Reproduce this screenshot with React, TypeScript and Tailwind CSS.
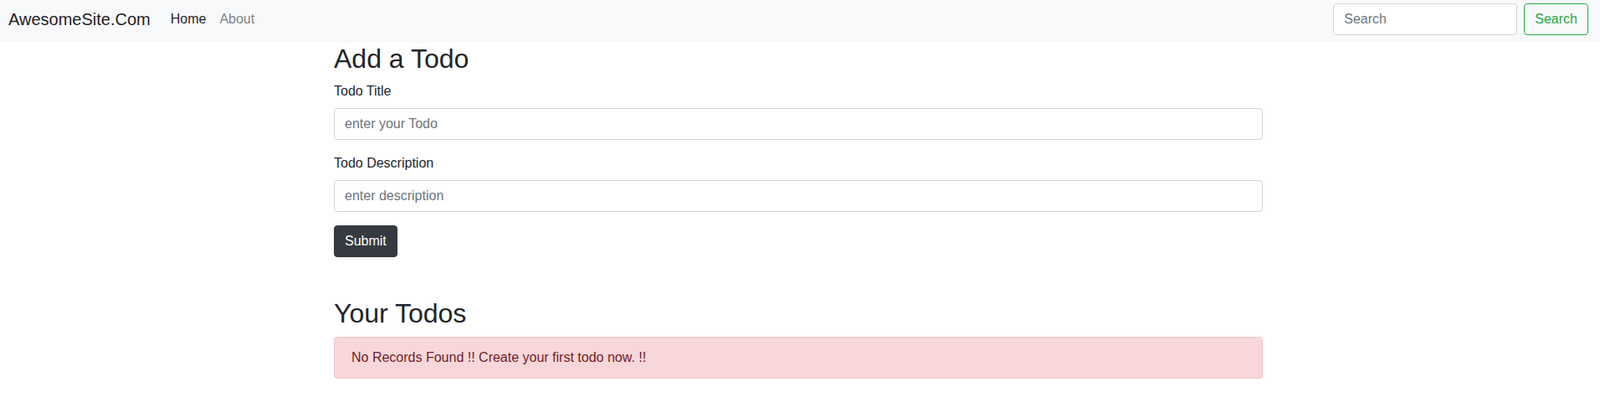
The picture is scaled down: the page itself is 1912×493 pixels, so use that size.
import React from "react";

export default function App() {
  return (
    <div className="min-h-[493px] bg-white font-['Liberation_Sans',Arial,sans-serif] text-base text-[#212529]">
      <nav className="flex h-[51px] items-center justify-between bg-[#f8f9fa] pb-[5px] pl-[10px] pr-[14px]">
        <div className="flex items-center">
          <a href="#" className="mr-4 py-[5px] text-[20px] leading-[30px] text-[rgba(0,0,0,0.9)]">
            AwesomeSite.Com
          </a>
          <ul className="flex items-center">
            <li>
              <a href="#" className="block px-2 py-2 leading-6 text-[rgba(0,0,0,0.9)]">
                Home
              </a>
            </li>
            <li>
              <a href="#" className="block px-2 py-2 leading-6 text-[rgba(0,0,0,0.5)]">
                About
              </a>
            </li>
          </ul>
        </div>
        <form className="flex items-center" onSubmit={(e) => e.preventDefault()}>
          <input
            type="search"
            placeholder="Search"
            className="mr-2 h-[38px] w-[220px] rounded border border-[#ced4da] bg-white px-3 py-[6px] text-base leading-6 text-[#495057] placeholder:text-[#6c757d] outline-none"
          />
          <button
            type="submit"
            className="h-[38px] rounded border border-[#28a745] bg-transparent px-3 py-[6px] text-base leading-6 text-[#28a745]"
          >
            Search
          </button>
        </form>
      </nav>

      <main className="ml-[399px] w-[1110px]">
        <h2 className="mb-2 text-[32px] font-normal leading-[1.2]">Add a Todo</h2>
        <form onSubmit={(e) => e.preventDefault()}>
          <div className="mb-4">
            <label className="mb-2 block leading-6">Todo Title</label>
            <input
              type="text"
              placeholder="enter your Todo"
              className="block h-[38px] w-full rounded border border-[#ced4da] bg-white px-3 py-[6px] text-base leading-6 text-[#495057] placeholder:text-[#6c757d] outline-none"
            />
          </div>
          <div className="mb-4">
            <label className="mb-2 block leading-6">Todo Description</label>
            <input
              type="text"
              placeholder="enter description"
              className="block h-[38px] w-full rounded border border-[#ced4da] bg-white px-3 py-[6px] text-base leading-6 text-[#495057] placeholder:text-[#6c757d] outline-none"
            />
          </div>
          <button
            type="submit"
            className="h-[38px] rounded border border-[#343a40] bg-[#343a40] px-3 py-[6px] text-base leading-6 text-white"
          >
            Submit
          </button>
        </form>

        <h2 className="mb-2 mt-12 text-[32px] font-normal leading-[1.2]">Your Todos</h2>
        <div className="rounded border border-[#f5c6cb] bg-[#f8d7da] px-5 py-3 leading-6 text-[#721c24]">
          No Records Found !! Create your first todo now. !!
        </div>
      </main>
    </div>
  );
}
